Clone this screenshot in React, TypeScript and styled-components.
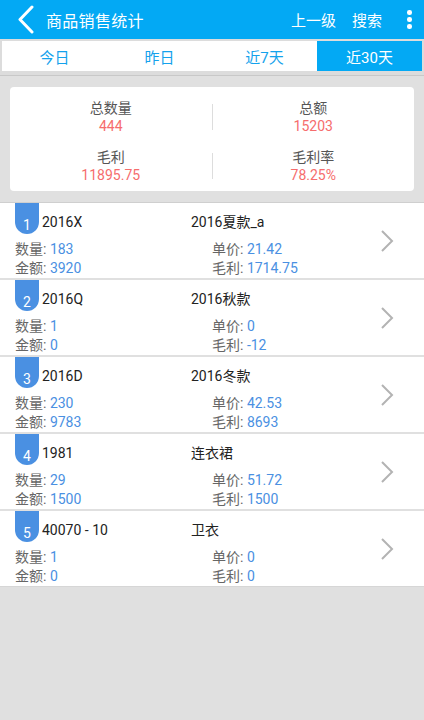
import React from "react";
import styled, { createGlobalStyle } from "styled-components";

const Global = createGlobalStyle`
  html, body { margin: 0; padding: 0; }
  body {
    background: #e0e0e0;
    font-family: Roboto, "Noto Sans CJK SC", sans-serif;
    width: 424px;
    min-height: 720px;
  }
  * { box-sizing: border-box; }
`;

const Page = styled.div`
  width: 424px;
  min-height: 720px;
  background: #e0e0e0;
`;

const Header = styled.div`
  height: 39px;
  background: #03a9f4;
  display: flex;
  align-items: center;
  color: #fff;
`;

const BackBtn = styled.div`
  width: 46px;
  padding-left: 17px;
  display: flex;
  align-items: center;
`;

const Title = styled.div`
  font-size: 16px;
  letter-spacing: 0.3px;
  flex: 1;
`;

const HeaderAction = styled.div`
  font-size: 15px;
  margin-right: ${(p: { $mr: number }) => p.$mr}px;
`;

const Dots = styled.div`
  width: 32px;
  display: flex;
  flex-direction: column;
  align-items: center;
  gap: 2.5px;
  padding-left: 3px;
`;

const Dot = styled.span`
  width: 4.5px;
  height: 4.5px;
  border-radius: 50%;
  background: #fff;
`;

const TabBar = styled.div`
  background: #dcdcdc;
  padding: 2px 2px 4px;
  border-bottom: 1px solid #c8c8c8;
  display: grid;
  grid-template-columns: repeat(4, 1fr);
`;

const Tab = styled.div<{ $active?: boolean }>`
  height: 30px;
  display: flex;
  align-items: center;
  justify-content: center;
  font-size: 15px;
  background: ${(p) => (p.$active ? "#03a9f4" : "#fff")};
  color: ${(p) => (p.$active ? "#fff" : "#14a2ec")};
`;

const Card = styled.div`
  margin: 11px 10px 0;
  background: #fff;
  border-radius: 4px;
  padding: 5px 0 1px;
`;

const SumRow = styled.div`
  height: 49px;
  display: grid;
  grid-template-columns: 1fr 1px 1fr;
  align-items: center;
`;

const SumCell = styled.div`
  display: flex;
  flex-direction: column;
  align-items: center;
`;

const SumLabel = styled.div`
  font-size: 14px;
  line-height: 18px;
  color: #555;
`;

const SumValue = styled.div`
  font-size: 14px;
  line-height: 18px;
  color: #f66d6d;
`;

const Divider = styled.div`
  width: 1px;
  height: 26px;
  background: #dddddd;
`;

const List = styled.div`
  margin-top: 11px;
  border-top: 1px solid #cfcfcf;
  display: flex;
  flex-direction: column;
  gap: 2px;
  border-bottom: 1px solid #d6d6d6;
`;

const Row = styled.div`
  height: 75px;
  background: #fff;
  display: flex;
  align-items: center;
  padding-left: 15px;
`;

const RowBody = styled.div`
  flex: 1;
  align-self: stretch;
  display: grid;
  grid-template-columns: 176px 21px 1fr;
  grid-template-rows: 37px 19px 19px;
  font-size: 14px;
`;

const TopLeft = styled.div`
  display: flex;
  align-items: flex-start;
`;

const Badge = styled.div`
  width: 24px;
  height: 31px;
  background: #4a90e2;
  border-radius: 0 0 12px 12px;
  color: #fff;
  font-size: 14px;
  line-height: 16px;
  display: flex;
  align-items: flex-end;
  justify-content: center;
  padding-bottom: 1px;
`;

const Code = styled.div`
  color: #222;
  margin-left: 3px;
  line-height: 38px;
`;

const Name = styled.div`
  grid-column: 2 / 4;
  color: #222;
  line-height: 38px;
`;

const Stat = styled.div<{ $right?: boolean }>`
  grid-column: ${(p) => (p.$right ? "3" : "1 / 3")};
  line-height: 19px;
  color: #666;
  white-space: nowrap;
`;

const StatValue = styled.span`
  color: #4a90e2;
`;

const Chevron = styled.div`
  width: 14px;
  margin-right: 30px;
  display: flex;
  align-items: center;
`;

type Item = {
  code: string;
  name: string;
  qty: string;
  price: string;
  amount: string;
  profit: string;
};

const items: Item[] = [
  { code: "2016X", name: "2016夏款_a", qty: "183", price: "21.42", amount: "3920", profit: "1714.75" },
  { code: "2016Q", name: "2016秋款", qty: "1", price: "0", amount: "0", profit: "-12" },
  { code: "2016D", name: "2016冬款", qty: "230", price: "42.53", amount: "9783", profit: "8693" },
  { code: "1981", name: "连衣裙", qty: "29", price: "51.72", amount: "1500", profit: "1500" },
  { code: "40070 - 10", name: "卫衣", qty: "1", price: "0", amount: "0", profit: "0" },
];

const tabs = ["今日", "昨日", "近7天", "近30天"];

export default function App() {
  return (
    <Page>
      <Global />
      <Header>
        <BackBtn>
          <svg width="17" height="29" viewBox="0 0 17 29">
            <path d="M15 2 L3 14.5 L15 27" fill="none" stroke="#fff" strokeWidth="3" strokeLinecap="round" strokeLinejoin="round" />
          </svg>
        </BackBtn>
        <Title>商品销售统计</Title>
        <HeaderAction $mr={16}>上一级</HeaderAction>
        <HeaderAction $mr={10}>搜索</HeaderAction>
        <Dots>
          <Dot />
          <Dot />
          <Dot />
        </Dots>
      </Header>
      <TabBar>
        {tabs.map((t, i) => (
          <Tab key={t} $active={i === 3}>
            {t}
          </Tab>
        ))}
      </TabBar>
      <Card>
        <SumRow>
          <SumCell>
            <SumLabel>总数量</SumLabel>
            <SumValue>444</SumValue>
          </SumCell>
          <Divider />
          <SumCell>
            <SumLabel>总额</SumLabel>
            <SumValue>15203</SumValue>
          </SumCell>
        </SumRow>
        <SumRow>
          <SumCell>
            <SumLabel>毛利</SumLabel>
            <SumValue>11895.75</SumValue>
          </SumCell>
          <Divider />
          <SumCell>
            <SumLabel>毛利率</SumLabel>
            <SumValue>78.25%</SumValue>
          </SumCell>
        </SumRow>
      </Card>
      <List>
        {items.map((it, i) => (
          <Row key={i}>
            <RowBody>
              <TopLeft>
                <Badge>{i + 1}</Badge>
                <Code>{it.code}</Code>
              </TopLeft>
              <Name>{it.name}</Name>
              <Stat>
                数量: <StatValue>{it.qty}</StatValue>
              </Stat>
              <Stat $right>
                单价: <StatValue>{it.price}</StatValue>
              </Stat>
              <Stat>
                金额: <StatValue>{it.amount}</StatValue>
              </Stat>
              <Stat $right>
                毛利: <StatValue>{it.profit}</StatValue>
              </Stat>
            </RowBody>
            <Chevron>
              <svg width="14" height="24" viewBox="0 0 14 24">
                <path d="M2 2 L12 12 L2 22" fill="none" stroke="#b3b3b3" strokeWidth="2" />
              </svg>
            </Chevron>
          </Row>
        ))}
      </List>
    </Page>
  );
}
